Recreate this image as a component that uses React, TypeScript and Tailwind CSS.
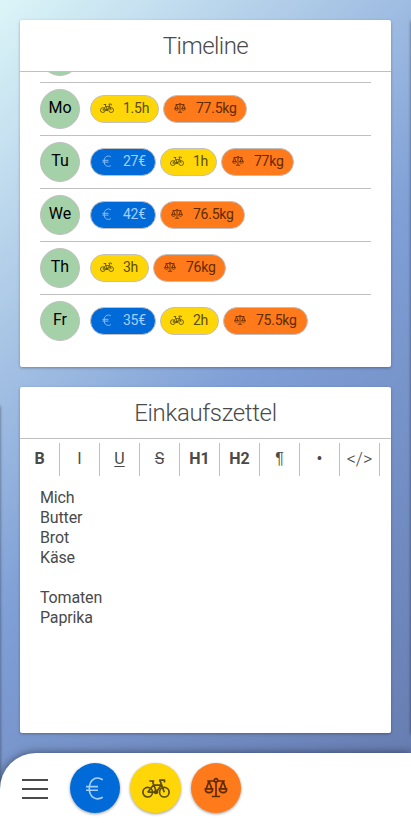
import React from "react";

type Kind = "euro" | "bike" | "scale";

function EuroIcon({ className }: { className: string }) {
  return (
    <svg viewBox="0 0 28 28" className={className} fill="none" stroke="currentColor" strokeWidth="1.6">
      <path d="M21.800 5.700C15 1.700 8.300 5.500 8.300 14.500s6.700 12.500 13.500 8.800M5 12.600h12M5 16.200h12" />
    </svg>
  );
}

function BikeIcon({ className }: { className: string }) {
  return (
    <svg viewBox="0 0 28 28" className={className} fill="none" stroke="currentColor" strokeWidth="1.7" strokeLinejoin="round">
      <circle cx="5.700" cy="18.200" r="4.800" />
      <circle cx="22.300" cy="18.200" r="4.800" />
      <path d="M7.300 7h5M10.300 7l4.200 11M5.700 18.200l5.500-7h8M5.700 18.200h8.500l5.300-7.500M22.300 18.200L17.800 6.100h4.700v2.500" />
      <circle cx="14" cy="18" r="1.400" fill="currentColor" />
    </svg>
  );
}

function ScaleIcon({ className }: { className: string }) {
  return (
    <svg viewBox="0 0 28 28" className={className} fill="none" stroke="currentColor" strokeWidth="1.7" strokeLinejoin="round">
      <circle cx="14" cy="6.300" r="1.700" />
      <path d="M5.200 7h7.200M15.600 7h7.200M14 8V22.200M9.800 22.500h8.400" />
      <path d="M7 7.200l-3 8M7 7.200l3 8M3.300 14.800h7.400c0 5.200-7.400 5.200-7.400 0z" />
      <path d="M21 7.200l-3 8M21 7.200l3 8M17.300 14.800h7.400c0 5.200-7.400 5.200-7.400 0z" />
    </svg>
  );
}

function KindIcon({ kind, className }: { kind: Kind; className: string }) {
  if (kind === "euro") return <EuroIcon className={className} />;
  if (kind === "bike") return <BikeIcon className={className} />;
  return <ScaleIcon className={className} />;
}

const colors: Record<Kind, string> = {
  euro: "bg-[#006ad8] text-[#a3d0ff]",
  bike: "bg-[#ffd708] text-[#5c4d00]",
  scale: "bg-[#ff7a1a] text-[#612a00]",
};

function Pill({ kind, label, size }: { kind: Kind; label: string; size: string }) {
  return (
    <div className={`flex h-7 shrink-0 items-center rounded-full border border-[#c0c0c0] pl-[9px] ${size} ${colors[kind]}`}>
      <KindIcon kind={kind} className="mb-0.5 size-3.5 shrink-0" />
      <span className="mb-0.5 ml-[9px] text-[14px] leading-5 tracking-[-0.25px] whitespace-nowrap">{label}</span>
    </div>
  );
}

type Entry = { kind: Kind; label: string; size: string };
const days: { day: string; entries: Entry[] }[] = [
  { day: "Mo", entries: [
    { kind: "bike", label: "1.5h", size: "w-[69px]" },
    { kind: "scale", label: "77.5kg", size: "w-[84px]" },
  ] },
  { day: "Tu", entries: [
    { kind: "euro", label: "27€", size: "w-[66px]" },
    { kind: "bike", label: "1h", size: "w-[57px]" },
    { kind: "scale", label: "77kg", size: "w-[73px]" },
  ] },
  { day: "We", entries: [
    { kind: "euro", label: "42€", size: "w-[66px]" },
    { kind: "scale", label: "76.5kg", size: "w-[85px]" },
  ] },
  { day: "Th", entries: [
    { kind: "bike", label: "3h", size: "w-[59px]" },
    { kind: "scale", label: "76kg", size: "w-[73px]" },
  ] },
  { day: "Fr", entries: [
    { kind: "euro", label: "35€", size: "w-[66px]" },
    { kind: "bike", label: "2h", size: "w-[59px]" },
    { kind: "scale", label: "75.5kg", size: "w-[85px]" },
  ] },
];

const tools: { label: string; style: string }[] = [
  { label: "B", style: "font-bold" },
  { label: "I", style: "" },
  { label: "U", style: "underline underline-offset-2" },
  { label: "S", style: "line-through" },
  { label: "H1", style: "font-bold" },
  { label: "H2", style: "font-bold" },
  { label: "¶", style: "font-['Liberation_Sans']" },
  { label: "•", style: "font-['Liberation_Sans'] text-[14px]" },
];

function CardTitle({ children, spacing }: { children: React.ReactNode; spacing: string }) {
  return (
    <h2 className={`flex h-[52px] shrink-0 items-center justify-center border-b border-[#c0c0c0] text-[24px] font-light text-[#4a4a4a] ${spacing}`}>
      {children}
    </h2>
  );
}

export default function App() {
  return (
    <div className="relative flex h-[823px] w-[411px] flex-col overflow-hidden bg-[linear-gradient(135deg,#dcf5f8_0%,#7f9fd6_50%,#6479ad_100%)] font-[Roboto,'Liberation_Sans',sans-serif] text-[#4a4a4a]">
      {/* edges of the neighbouring cards */}
      <div className="absolute top-[405px] -left-10 h-[400px] w-10 shadow-[0_1px_3px_rgba(0,0,0,0.5)]" />
      <div className="absolute top-5 left-[411px] h-[713px] w-10 shadow-[0_1px_3px_rgba(0,0,0,0.5)]" />

      <main className="flex flex-col gap-5 px-5 pt-5">
        <section className="flex h-[347px] flex-col overflow-hidden rounded-xs bg-white shadow-[0_1px_3px_rgba(0,0,0,0.3)]">
          <CardTitle spacing="tracking-[-0.55px]">Timeline</CardTitle>
          <div className="flex flex-1 flex-col overflow-hidden px-5">
            <div className="flex h-2.5 shrink-0 flex-col justify-end overflow-hidden pb-1.5">
              <div className="size-10 shrink-0 rounded-full border border-[#c0c0c0] bg-[#a4d1a8]" />
            </div>
            {days.map(({ day, entries }) => (
              <div key={day} className="flex h-[53px] shrink-0 items-center border-t border-[#c0c0c0]">
                <div className="mr-2.5 flex size-10 items-center justify-center rounded-full border border-[#c0c0c0] bg-[#a4d1a8] pb-0.5 text-base text-black">
                  {day}
                </div>
                <div className="flex gap-1">
                  {entries.map((e) => <Pill key={e.kind} {...e} />)}
                </div>
              </div>
            ))}
          </div>
        </section>

        <section className="flex h-[346px] flex-col overflow-hidden rounded-xs bg-white shadow-[0_1px_3px_rgba(0,0,0,0.3)]">
          <CardTitle spacing="tracking-[-0.35px]">Einkaufszettel</CardTitle>
          <div className="mt-1 flex h-[33px] shrink-0">
            {tools.map(({ label, style }) => (
              <div key={label} className={`flex w-10 items-center justify-center border-r border-[#c0c0c0] pb-0.5 text-base ${style}`}>
                {label}
              </div>
            ))}
            <div className="flex w-10 items-center justify-center border-r border-[#c0c0c0] pb-0.5 text-[18px] font-light">&lt;/&gt;</div>
          </div>
          <div className="px-5 pt-3 text-base leading-5 tracking-[-0.15px] whitespace-pre-line">
            {"Mich\nButter\nBrot\nKäse\n\nTomaten\nPaprika"}
          </div>
        </section>
      </main>

      <nav className="relative mt-5 flex h-[70px] items-center rounded-tl-[36px] bg-white pl-[22px] shadow-[0_0_10px_rgba(0,0,0,0.5)]">
        <div className="mt-0.5 mr-[22px] flex w-[26px] flex-col gap-[7px]">
          <div className="h-0.5 bg-[#4a4a4a]" />
          <div className="h-0.5 bg-[#4a4a4a]" />
          <div className="h-0.5 bg-[#4a4a4a]" />
        </div>
        <div className="flex gap-2.5">
          <div className={`flex size-[50px] items-center justify-center rounded-full shadow-[0_1px_3px_rgba(0,0,0,0.4)] ${colors.euro}`}>
            <EuroIcon className="size-7" />
          </div>
          <div className={`flex h-[50px] w-[51px] items-center justify-center rounded-full shadow-[0_1px_3px_rgba(0,0,0,0.4)] ${colors.bike}`}>
            <BikeIcon className="size-7" />
          </div>
          <div className={`flex size-[50px] items-center justify-center rounded-full shadow-[0_1px_3px_rgba(0,0,0,0.4)] ${colors.scale}`}>
            <ScaleIcon className="size-7" />
          </div>
        </div>
      </nav>
    </div>
  );
}
